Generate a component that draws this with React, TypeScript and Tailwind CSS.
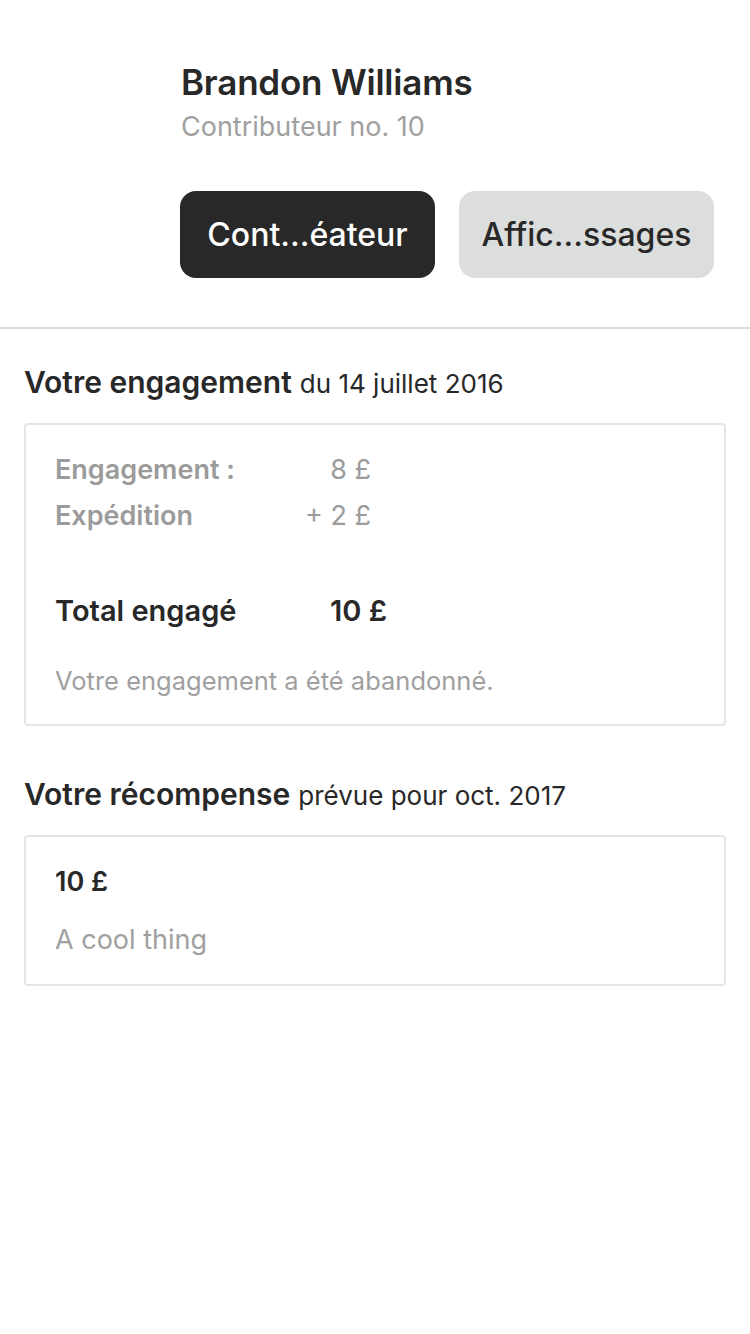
import React from "react";

export default function App() {
  return (
    <div className="w-[750px] h-[1334px] bg-white text-[#282828]" style={{ fontFamily: "Inter, 'Noto Sans', sans-serif" }}>
      <div className="pl-[181px] pt-[62px]">
        <div className="text-[35px] font-semibold leading-[40px] tracking-[-0.2px]">Brandon Williams</div>
        <div className="text-[27px] leading-[32px] mt-[9px] text-[#a0a0a0]">Contributeur no. 10</div>
      </div>
      <div className="flex gap-[24px] pl-[180px] mt-[48px]">
        <div className="w-[255px] h-[87px] rounded-[16px] bg-[#282828] text-white flex items-center justify-center text-[32px] font-medium">Cont...éateur</div>
        <div className="w-[255px] h-[87px] rounded-[16px] bg-[#dcdedd] text-[#282828] flex items-center justify-center text-[32px] font-medium">Affic...ssages</div>
      </div>
      <div className="h-[2px] bg-[#dcdcdc] mt-[49px]" />
      <div className="px-[24px]">
        <div className="mt-[35px] h-[36px] flex items-baseline gap-[8px] text-[30px] leading-[36px]">
          <span className="font-semibold">Votre engagement</span>
          <span className="text-[26px] leading-[36px]">du 14 juillet 2016</span>
        </div>
        <div className="mt-[23px] border-2 border-[#e5e5e5] rounded-[4px] px-[29px] pt-[22px] pb-[27px]">
          <div className="flex text-[27px] leading-[46px] font-semibold text-[#9b9b9b]">
            <span className="w-[190px]">Engagement :</span>
            <span className="w-[126px] text-right font-normal">8 £</span>
          </div>
          <div className="flex text-[27px] leading-[46px] font-semibold text-[#9b9b9b]">
            <span className="w-[190px]">Expédition</span>
            <span className="w-[126px] text-right font-normal">+ 2 £</span>
          </div>
          <div className="flex text-[29px] leading-[40px] font-semibold mt-[52px]">
            <span className="w-[275px]">Total engagé</span>
            <span>10 £</span>
          </div>
          <div className="text-[25.5px] leading-[32px] text-[#a0a0a0] mt-[34px]">Votre engagement a été abandonné.</div>
        </div>
        <div className="mt-[50px] h-[36px] flex items-baseline gap-[8px] text-[30px] leading-[36px]">
          <span className="font-semibold">Votre récompense</span>
          <span className="text-[26px] leading-[36px]">prévue pour oct. 2017</span>
        </div>
        <div className="mt-[23px] border-2 border-[#e5e5e5] rounded-[4px] px-[29px] pt-[27px] pb-[26px]">
          <div className="text-[27px] leading-[36px] font-semibold">10 £</div>
          <div className="text-[27px] leading-[36px] text-[#a0a0a0] mt-[22px]">A cool thing</div>
        </div>
      </div>
    </div>
  );
}
